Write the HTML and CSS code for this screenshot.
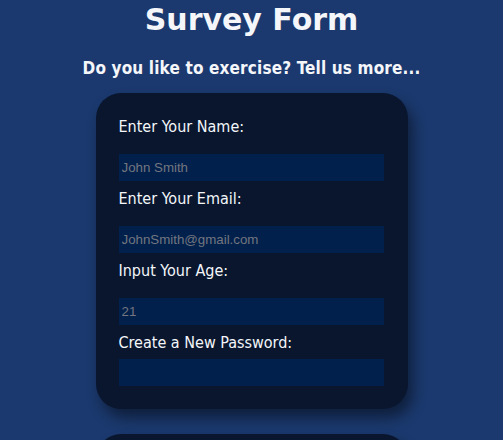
FILE: index.html
```html
<!DOCTYPE html>
<html>
<head>
<meta charset="utf-8">
<link rel="stylesheet" href="styles.css">
</head>
<body>
<h1 class="title">Survey Form</h1>
<p class="subtitle">Do you like to exercise? Tell us more...</p>
<form class="card">
  <label class="label" for="name">Enter Your Name:</label>
  <input class="field" id="name" type="text" placeholder="John Smith">
  <label class="label" for="email">Enter Your Email:</label>
  <input class="field" id="email" type="email" placeholder="JohnSmith@gmail.com">
  <label class="label" for="age">Input Your Age:</label>
  <input class="field" id="age" type="number" placeholder="21">
  <label class="label label-last" for="pw">Create a New Password:</label>
  <input class="field field-last" id="pw" type="password">
</form>
<div class="card card-next"></div>
</body>
</html>
```
FILE: styles.css
```css
html, body {
  margin: 0;
  padding: 0;
}
body {
  background: #1b396e;
  color: #f4f6fa;
  font-family: "DejaVu Sans", Verdana, sans-serif;
  overflow: hidden;
  height: 440px;
}
.title {
  margin: 2px 0 0;
  text-align: center;
  font-size: 30px;
  font-weight: bold;
  line-height: 36px;
}
.subtitle {
  margin: 19px 0 14px;
  text-align: center;
  font-family: "DejaVu Sans Condensed", "DejaVu Sans", sans-serif;
  font-size: 17px;
  font-weight: bold;
  letter-spacing: 0.15px;
  line-height: 22px;
}
.card {
  width: 312px;
  box-sizing: border-box;
  margin: 0 auto;
  padding: 24px 23px 23px 23px;
  background: #09162e;
  border-radius: 25px;
  box-shadow: 5px 9px 14px rgba(0, 0, 0, 0.45);
  display: flex;
  flex-direction: column;
}
.label {
  font-family: "DejaVu Sans Condensed", "DejaVu Sans", sans-serif;
  font-size: 16px;
  line-height: 20px;
  margin-bottom: 17px;
}
.label-last {
  margin-bottom: 6px;
}
.field {
  width: 265px;
  height: 27px;
  box-sizing: border-box;
  border: none;
  outline: none;
  margin: 0 0 8px;
  padding: 0 3px;
  background: #01204b;
  color: #dde;
  font-family: "Liberation Sans", Arial, sans-serif;
  font-size: 13.3px;
}
.field-last {
  margin-bottom: 0;
}
.field::placeholder {
  color: #737680;
}
.card-next {
  margin-top: 25px;
  height: 60px;
  padding: 0;
}
```
